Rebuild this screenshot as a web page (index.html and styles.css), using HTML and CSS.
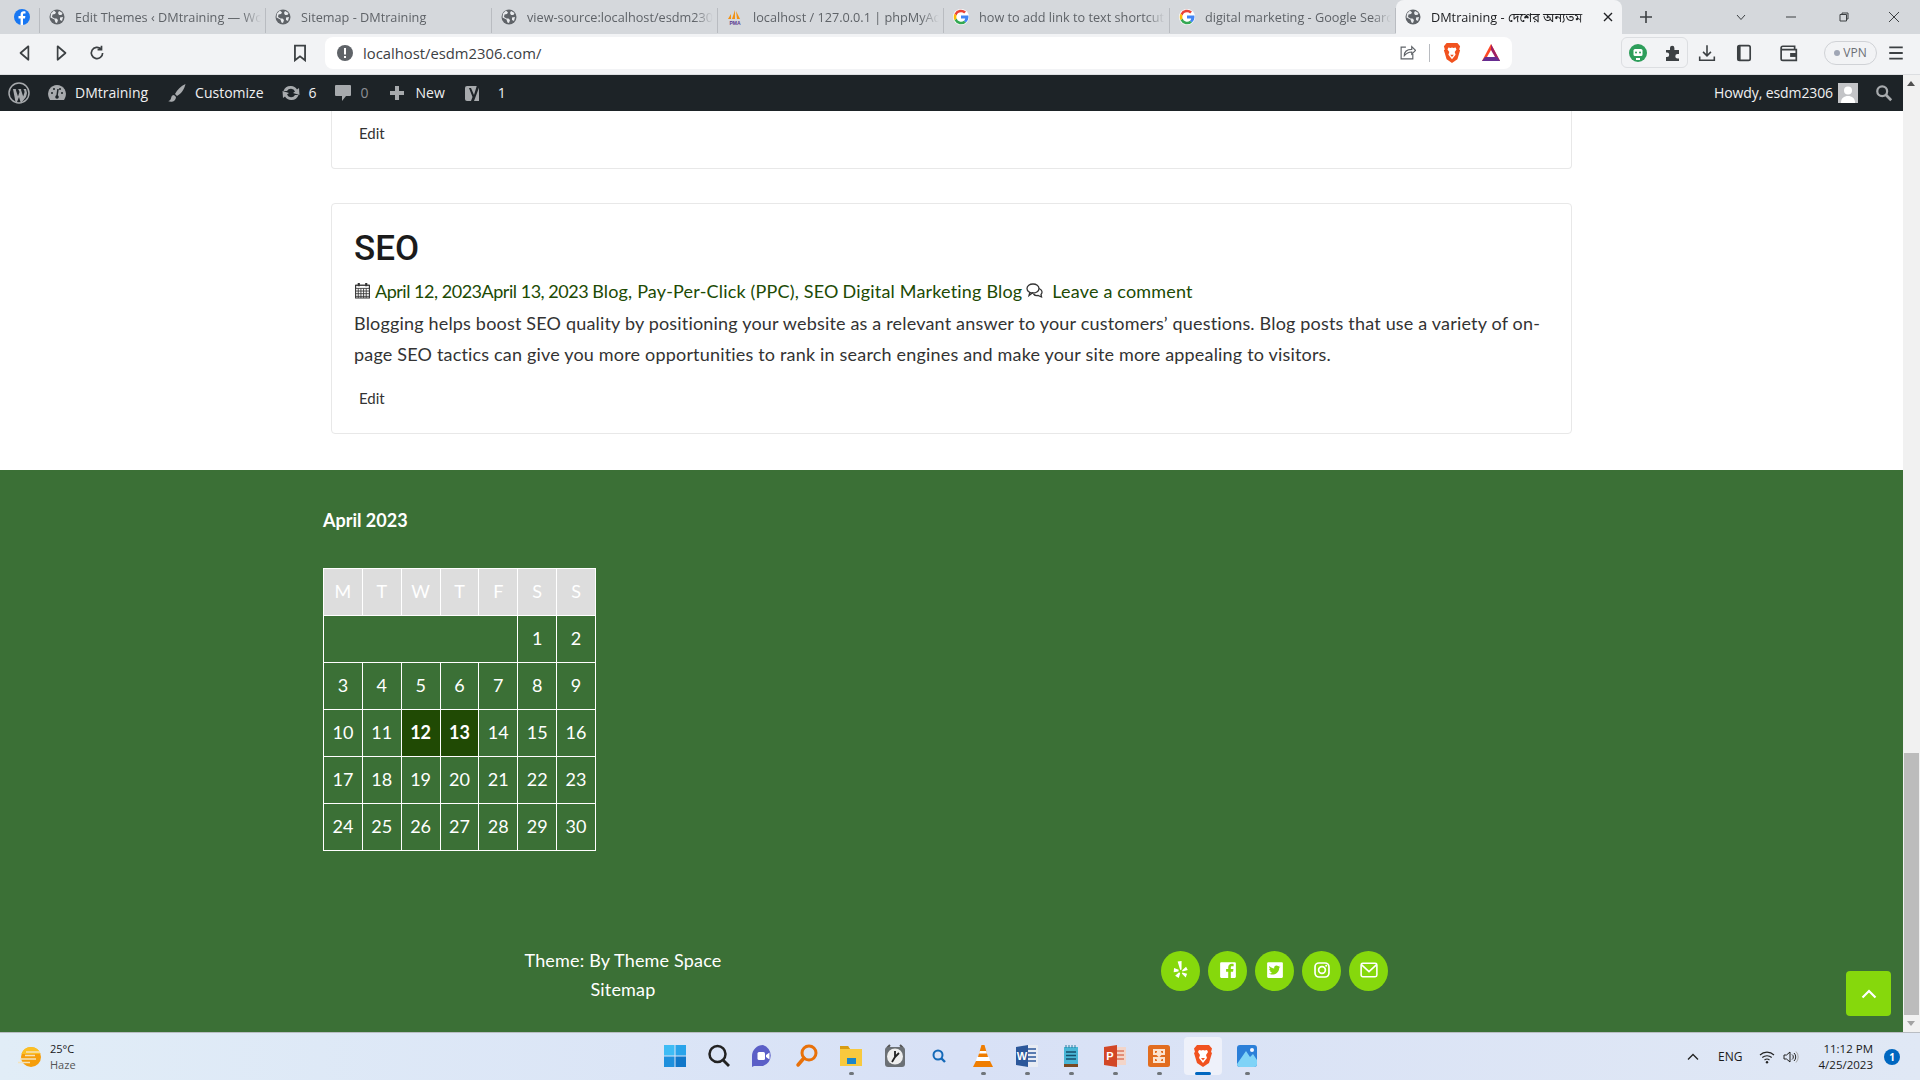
FILE: index.html
```html
<!DOCTYPE html>
<html lang="en">
<head>
<meta charset="utf-8">
<title>DMtraining</title>
<link rel="stylesheet" href="styles.css">
</head>
<body>
<svg class="defs" width="0" height="0">
  <defs>
    <symbol id="globe" viewBox="0 0 16 16"><circle cx="8" cy="8" r="7.5" fill="#5f6368"/><path d="M5 1.500 7 3.500 6 5 3.500 5.500 3 8l2.500 1.500L7.500 9.500 9 11l-1 3-1.500-.5L5.500 10.500 1.500 8.500 2 4.500zM10 2l3.500 2-1 2L10 6 9 4zM11 8.500l3-.5-1 4-2-1z" fill="#e8eaed"/></symbol>
    <symbol id="gicon" viewBox="0 0 16 16"><circle cx="8" cy="8" r="8" fill="#fff"/><path d="M8 3.200a4.800 4.800 0 0 1 3.200 1.200L13 2.600A7.300 7.300 0 0 0 1.500 4.800l2.100 1.600A4.700 4.700 0 0 1 8 3.200z" fill="#ea4335"/><path d="M3.600 9.600 1.500 11.200A7.300 7.300 0 0 0 13 13.400l-2-1.600A4.800 4.800 0 0 1 3.600 9.600z" fill="#34a853"/><path d="M3.600 9.600a4.900 4.900 0 0 1 0-3.200L1.500 4.800a7.300 7.300 0 0 0 0 6.400z" fill="#fbbc05"/><path d="M15.300 6.600H8v3h4.200A3.600 3.600 0 0 1 11 11.800l2 1.600a7.300 7.300 0 0 0 2.300-6.800z" fill="#4285f4"/></symbol>
    <symbol id="lion" viewBox="0 0 20 24"><path d="M4 1h12l3 3.500-1 3.500 1 1-3 10-6 4-6-4-3-10 1-1-1-3.500z" fill="#f1521f"/><path d="M6 6l2.500.5L10 6l1.500.5L14 6l1 2-2 3 1 3-4 5-4-5 1-3-2-3z" fill="#fff"/><path d="M8 14h4l-2 2.500z" fill="#f1521f"/></symbol>
  </defs>
</svg>

<header class="tabstrip">
  <div class="tab-pinned">
    <svg class="fav" viewBox="0 0 16 16"><circle cx="8" cy="8" r="8" fill="#1877f2"/><path d="M9 16V9.500h2l.4-2.400H9V5.700c0-.8.300-1.200 1.200-1.200h1.300V2.400C11 2.300 10.400 2.200 9.800 2.200 7.900 2.200 6.600 3.400 6.600 5.400v1.700H4.500v2.400h2.100V16z" fill="#fff"/></svg>
  </div>
  <div class="tab"><svg class="fav"><use href="#globe"/></svg><span class="tab-title">Edit Themes ‹ DMtraining — WordPress</span></div>
  <div class="tab"><svg class="fav"><use href="#globe"/></svg><span class="tab-title">Sitemap - DMtraining</span></div>
  <div class="tab"><svg class="fav"><use href="#globe"/></svg><span class="tab-title">view-source:localhost/esdm2306.com/</span></div>
  <div class="tab">
    <svg class="fav" viewBox="0 0 16 16"><path d="M8 1 5 10h3zM9 2l1 8h3zM4 5 1 10h3z" fill="#f29111"/><text x="8" y="15.500" class="pma">PMA</text></svg>
    <span class="tab-title">localhost / 127.0.0.1 | phpMyAdmin</span></div>
  <div class="tab"><svg class="fav"><use href="#gicon"/></svg><span class="tab-title">how to add link to text shortcut</span></div>
  <div class="tab"><svg class="fav"><use href="#gicon"/></svg><span class="tab-title">digital marketing - Google Search</span></div>
  <div class="tab tab-active"><svg class="fav"><use href="#globe"/></svg><span class="tab-title">DMtraining - দেশের অন্যতম</span>
    <svg class="tab-x" viewBox="0 0 10 10"><path d="M1 1l8 8M9 1l-8 8" stroke="#202124" stroke-width="1.400"/></svg></div>
  <svg class="newtab" viewBox="0 0 12 12"><path d="M6 0v12M0 6h12" stroke="#3c4043" stroke-width="1.600"/></svg>
  <div class="win-controls">
    <svg class="win-btn win-chevron" viewBox="0 0 10 10"><path d="M1 3l4 4.500L9 3" fill="none" stroke="#3c4043" stroke-width="1"/></svg>
    <svg class="win-btn win-min" viewBox="0 0 10 10"><path d="M0 5h10" stroke="#3c4043"/></svg>
    <svg class="win-btn win-restore" viewBox="0 0 10 10"><path d="M1 2.500h6.500V9H1zM3 2.500V1h6v6H7.500" fill="none" stroke="#3c4043"/></svg>
    <svg class="win-btn" viewBox="0 0 10 10"><path d="M0 0l10 10M10 0 0 10" stroke="#3c4043"/></svg>
  </div>
</header>

<div class="toolbar">
  <svg class="tool" viewBox="0 0 16 16"><path d="M11 2 4 8l7 6z" fill="none" stroke="#3c4043" stroke-width="1.500" stroke-linejoin="round"/></svg>
  <svg class="tool" viewBox="0 0 16 16"><path d="M5 2l7 6-7 6z" fill="none" stroke="#3c4043" stroke-width="1.500" stroke-linejoin="round"/></svg>
  <svg class="tool" viewBox="0 0 16 16"><path d="M13 8a5 5 0 1 1-1.500-3.600M12 1.500V5H8.500" fill="none" stroke="#3c4043" stroke-width="1.500"/></svg>
  <svg class="tool tool-bookmark" viewBox="0 0 16 16"><path d="M3.500 1.500h9v13L8 11l-4.500 3.500z" fill="none" stroke="#3c4043" stroke-width="1.600"/></svg>
  <div class="omnibox">
    <svg class="omni-info" viewBox="0 0 16 16"><circle cx="8" cy="8" r="8" fill="#5f6368"/><path d="M7 3h2v6.500H7zM7 11h2v2H7z" fill="#fff"/></svg>
    <span class="url">localhost/esdm2306.com/</span>
    <svg class="omni-share" viewBox="0 0 16 16"><path d="M6.500 3H2v11h11V9.500M5 11c0-4 3-6 7-6V2.500L15.500 6 12 9.500V7.500c-3 0-5 1-7 3.500z" fill="none" stroke="#5f6368" stroke-width="1.100"/></svg>
    <span class="omni-sep"></span>
    <svg class="omni-lion"><use href="#lion"/></svg>
    <svg class="omni-bat" viewBox="0 0 20 20"><path d="M10 1 19 18H1z" fill="#ff4724"/><path d="M10 1l9 17H10z" fill="#9e1f63"/><path d="M1 18h18l-3-4H4z" fill="#662d91"/><path d="M10 7l4 7H6z" fill="#fff"/></svg>
  </div>
  <div class="ext-box">
    <svg class="ext" viewBox="0 0 18 18"><circle cx="9" cy="9" r="9" fill="#2e9e5b"/><rect x="4.500" y="5" width="9" height="7" rx="1.500" fill="#fff"/><circle cx="7" cy="8.500" r="1" fill="#2e9e5b"/><circle cx="11" cy="8.500" r="1" fill="#2e9e5b"/><path d="M7 14h4v2H7z" fill="#fff"/></svg>
    <svg class="ext" viewBox="0 0 18 18"><path d="M2 6h4V4a2.200 2.200 0 0 1 4.400 0v2H15v4h-1.500a2.200 2.200 0 0 0 0 4.400H15V17H2v-4h1a2.200 2.200 0 0 0 0-4.400H2z" fill="#3c4043"/></svg>
  </div>
  <svg class="tool tool-dl" viewBox="0 0 16 16"><path d="M8 1v9M4.500 7 8 10.500 11.500 7M1.500 11v3.500h13V11" fill="none" stroke="#3c4043" stroke-width="1.400"/></svg>
  <svg class="tool tool-side" viewBox="0 0 16 16"><rect x="2.500" y="1.500" width="11" height="13" rx="1.500" fill="none" stroke="#3c4043" stroke-width="1.500"/><rect x="2.500" y="1.500" width="2.500" height="13" fill="#3c4043"/></svg>
  <svg class="tool tool-wallet" viewBox="0 0 18 16"><path d="M2 3.500V13a1.500 1.500 0 0 0 1.500 1.500h12V5H3.500A1.500 1.500 0 0 1 2 3.500 1.500 1.500 0 0 1 3.500 2H14v3" fill="none" stroke="#3c4043" stroke-width="1.500"/><rect x="10" y="8" width="6" height="3.500" fill="#3c4043"/></svg>
  <div class="vpn"><span class="vpn-dot"></span>VPN</div>
  <svg class="tool tool-menu" viewBox="0 0 16 16"><path d="M2 3h12M2 8h12M2 13h12" stroke="#3c4043" stroke-width="1.600"/></svg>
</div>

<div class="viewport">
  <div class="page">
    <nav class="adminbar">
      <div class="ab-group">
        <svg class="ab-wp" viewBox="0 0 22 22"><circle cx="11" cy="11" r="10" fill="none" stroke="#a7aaad" stroke-width="1.500"/><path d="M5 7h3.500l-.8.500 2.300 7 1.500-4.500-1-2.500-.8-.5h4l-.8.500 2.300 7 1.200-3.700c.5-1.800-.6-2.800-.9-3.800H18l1 4-1 4-4 5h-1.500l-1.500-5-2 5H7.500z" fill="#a7aaad"/></svg>
        <span class="ab-item ab-site"><svg class="ab-i" viewBox="0 0 20 20"><path d="M10 2a9 9 0 0 0-8 13l1 2h14l1-2a9 9 0 0 0-8-13z" fill="#a7aaad"/><path d="M10 13l1-7" stroke="#1d2327" stroke-width="1.500"/><circle cx="10" cy="14" r="1.800" fill="#1d2327"/><circle cx="5" cy="10" r="1" fill="#1d2327"/><circle cx="15" cy="10" r="1" fill="#1d2327"/><circle cx="7" cy="6" r="1" fill="#1d2327"/><circle cx="13" cy="6" r="1" fill="#1d2327"/></svg>DMtraining</span>
        <span class="ab-item ab-custom"><svg class="ab-i" viewBox="0 0 20 20"><path d="M18.500 1C14 3 10 7 8 11l2 2C14 11 17.500 6 18.500 1zM7 12c-3 0-2.500 3-3.500 4.500C2.800 17.500 1.500 18 1 18c3 1.500 7.500 1 8-4z" fill="#a7aaad"/></svg>Customize</span>
        <span class="ab-item ab-update"><svg class="ab-i" viewBox="0 0 20 20"><path d="M10 3a7 7 0 0 1 6 3.500L18 5l.5 7-6.500-2 2-1.500A4.500 4.500 0 0 0 6 8H2.500A7.500 7.500 0 0 1 10 3zM10 17a7 7 0 0 1-6-3.500L2 15l-.5-7L8 10l-2 1.500A4.500 4.500 0 0 0 14 12h3.500A7.500 7.500 0 0 1 10 17z" fill="#a7aaad"/></svg>6</span>
        <span class="ab-item ab-comment"><svg class="ab-i" viewBox="0 0 20 20"><path d="M3 2h14a1 1 0 0 1 1 1v9a1 1 0 0 1-1 1h-4l-4 5v-5H3a1 1 0 0 1-1-1V3a1 1 0 0 1 1-1z" fill="#a7aaad"/></svg><span class="ab-muted">0</span></span>
        <span class="ab-item ab-new"><svg class="ab-i" viewBox="0 0 20 20"><path d="M8 3h4v5h5v4h-5v5H8v-5H3V8h5z" fill="#a7aaad"/></svg>New</span>
        <span class="ab-item ab-yoast"><svg class="ab-i ab-i-y" viewBox="0 0 20 20"><path d="M4 3h11a1 1 0 0 1 1 1v14H4a2 2 0 0 1-2-2V5a2 2 0 0 1 2-2z" fill="#a7aaad"/><path d="M8 5l3 7 3-10h3l-6 16H8l1.500-4L6 5z" fill="#1d2327"/></svg>1</span>
      </div>
      <div class="ab-group">
        <span class="ab-howdy">Howdy, esdm2306</span>
        <svg class="ab-avatar" viewBox="0 0 20 20"><rect width="20" height="20" fill="#c3c4c7"/><circle cx="10" cy="7.500" r="4" fill="#fff"/><path d="M3 20c0-5 3-7 7-7s7 2 7 7z" fill="#fff"/></svg>
        <svg class="ab-search" viewBox="0 0 20 20"><circle cx="8" cy="8" r="5.500" fill="none" stroke="#a7aaad" stroke-width="2.500"/><path d="M12 12l6 6" stroke="#a7aaad" stroke-width="3"/></svg>
      </div>
    </nav>

    <main class="content">
      <article class="card card-cut">
        <a class="edit">Edit</a>
      </article>
      <article class="card card-post">
        <h2 class="post-title">SEO</h2>
        <div class="post-meta">
          <svg class="meta-i" viewBox="0 0 16 16"><path d="M1.500 3h13v12h-13z" fill="none" stroke="#333" stroke-width="1"/><path d="M1.500 3h13v3h-13zM1.500 8.500h13M1.500 11h13M1.500 13.500h13M4 6v9M6.500 6v9M9 6v9M11.500 6v9" fill="none" stroke="#333" stroke-width=".8"/><path d="M3.500 1h2v3h-2zM10.500 1h2v3h-2z" fill="#333"/></svg>
          <span class="meta-date">April 12, 2023April 13, 2023</span>
          <span>Blog, Pay-Per-Click (PPC), SEO</span>
          <span>Digital Marketing Blog</span>
          <svg class="meta-i meta-c" viewBox="0 0 18 16"><ellipse cx="7" cy="6" rx="6" ry="4.500" fill="none" stroke="#333" stroke-width="1.300"/><path d="M4 9.500 3 13l4-3M13 6c3 1 4 4 2 6l.5 2.500L12 13c-2 .3-3.500-.2-4.500-1.500" fill="none" stroke="#333" stroke-width="1.300"/></svg>
          <span class="meta-comment">Leave a comment</span>
        </div>
        <p class="post-text">Blogging helps boost SEO quality by positioning your website as a relevant answer to your customers’ questions. Blog posts that use a variety of on-page SEO tactics can give you more opportunities to rank in search engines and make your site more appealing to visitors.</p>
        <a class="edit edit-post">Edit</a>
      </article>
    </main>

    <footer class="footer">
      <h3 class="cal-title">April 2023</h3>
      <table class="calendar">
        <thead><tr><th>M</th><th>T</th><th>W</th><th>T</th><th>F</th><th>S</th><th>S</th></tr></thead>
        <tbody>
          <tr><td colspan="5"></td><td>1</td><td>2</td></tr>
          <tr><td>3</td><td>4</td><td>5</td><td>6</td><td>7</td><td>8</td><td>9</td></tr>
          <tr><td>10</td><td>11</td><td class="cal-on">12</td><td class="cal-on">13</td><td>14</td><td>15</td><td>16</td></tr>
          <tr><td>17</td><td>18</td><td>19</td><td>20</td><td>21</td><td>22</td><td>23</td></tr>
          <tr><td>24</td><td>25</td><td>26</td><td>27</td><td>28</td><td>29</td><td>30</td></tr>
        </tbody>
      </table>
      <div class="foot-row">
        <div class="credit"><div>Theme: By Theme Space</div><div class="credit-map">Sitemap</div></div>
        <div class="socials">
          <span class="soc"><svg viewBox="0 0 16 16"><path d="M5 .5 8.500 0v7.500L7.300 8zM1.800 6.200 6 7.800l-.3 1.500-4.200.6zM2.800 13l3.500-3 1 .8L6 15zM9.200 10.200l4.200 1.200-1.200 3.300-3.500-3.500zM9 8.200l3.500-3.200 1.500 3-4.700 1.300z" fill="#fff"/></svg></span>
          <span class="soc"><svg viewBox="0 0 16 16"><path d="M2 1h12a1 1 0 0 1 1 1v12a1 1 0 0 1-1 1h-3.500V9.500h2l.3-2.300h-2.300V5.800c0-.7.200-1.100 1.100-1.100H13V2.600c-.3 0-1-.1-1.700-.1C9.500 2.500 8.200 3.600 8.200 5.500v1.700H6.300v2.300h1.900V15H2a1 1 0 0 1-1-1V2a1 1 0 0 1 1-1z" fill="#fff"/></svg></span>
          <span class="soc"><svg viewBox="0 0 16 16"><path d="M2 1h12a1 1 0 0 1 1 1v12a1 1 0 0 1-1 1H2a1 1 0 0 1-1-1V2a1 1 0 0 1 1-1z" fill="#fff"/><path d="M12.500 5c-.4.200-.8.300-1.200.3.400-.3.800-.7.900-1.100-.4.200-.9.400-1.300.5a2.100 2.100 0 0 0-3.600 1.900C5.500 6.500 4 5.700 3.100 4.400c-.5.900-.2 2.100.7 2.700-.3 0-.7-.1-1-.3 0 1 .7 1.900 1.700 2.100-.3.100-.6.100-.9 0 .3.800 1 1.400 1.900 1.400-.9.700-2 1-3 .9 3 1.900 8.900.9 9.300-5.300.5-.3.900-.7 1.200-1z" fill="#86d80c"/></svg></span>
          <span class="soc"><svg viewBox="0 0 16 16"><rect x="1.800" y="1.800" width="12.400" height="12.400" rx="3.500" fill="none" stroke="#fff" stroke-width="1.500"/><circle cx="8" cy="8" r="3" fill="none" stroke="#fff" stroke-width="1.500"/><circle cx="11.700" cy="4.300" r=".9" fill="#fff"/></svg></span>
          <span class="soc"><svg viewBox="0 0 16 16"><rect x="1" y="2" width="14" height="12" rx="1.500" fill="none" stroke="#fff" stroke-width="1.400"/><path d="M1.500 3.500 8 9.500l6.500-6" fill="none" stroke="#fff" stroke-width="1.400"/></svg></span>
        </div>
      </div>
      <a class="to-top"><svg viewBox="0 0 16 10"><path d="M1.500 8.500 8 2l6.500 6.500" fill="none" stroke="#fff" stroke-width="2.200"/></svg></a>
    </footer>
  </div>
  <div class="scrollbar">
    <span class="sb-up"></span>
    <span class="sb-track"><span class="sb-thumb"></span></span>
    <span class="sb-down"></span>
  </div>
</div>

<div class="taskbar">
  <div class="weather">
    <svg class="weather-i" viewBox="0 0 26 22"><circle cx="13" cy="11" r="10" fill="#f59e0b"/><path d="M13 1a10 10 0 0 1 9.500 7H3.500A10 10 0 0 1 13 1z" fill="#fbbf24"/><path d="M2 13h16M8 6h14M7 9.500h10M0 16.500h12" stroke="#f3e3bc" stroke-width="1.500"/></svg>
    <div class="weather-t"><div>25°C</div><div class="weather-sub">Haze</div></div>
  </div>
  <div class="tb-apps">
    <span class="app"><svg viewBox="0 0 24 24"><path d="M1 1h10.500v10.500H1z" fill="#3ebcf5"/><path d="M12.500 1H23v10.500H12.500z" fill="#2aa4ea"/><path d="M1 12.500h10.500V23H1z" fill="#1e90dd"/><path d="M12.500 12.500H23V23H12.500z" fill="#1177c9"/></svg></span>
    <span class="app"><svg viewBox="0 0 24 24"><circle cx="10.500" cy="10" r="8" fill="none" stroke="#222" stroke-width="2.500"/><path d="M16 16l6 6" stroke="#222" stroke-width="2.800"/></svg></span>
    <span class="app"><svg viewBox="0 0 24 24"><path d="M12 1a11 11 0 0 1 0 21H3l-2 1V12A11 11 0 0 1 12 1z" fill="#5b5fc7"/><rect x="6.500" y="8" width="7.500" height="8" rx="1.500" fill="#fff"/><path d="M15 11l3.500-2.500v7L15 13z" fill="#fff"/></svg></span>
    <span class="app"><svg viewBox="0 0 24 24"><circle cx="14" cy="9" r="7" fill="none" stroke="#e8710a" stroke-width="3"/><path d="M9 14l-6 7" stroke="#e8710a" stroke-width="3.500" stroke-linecap="round"/></svg></span>
    <span class="app app-on"><svg viewBox="0 0 24 24"><path d="M1 2h8l2 3h12v17H1z" fill="#f8c93e"/><path d="M1 2h8l2 3H1z" fill="#d89c13"/><path d="M8 14h9v6H8z" fill="#1c86c8"/></svg></span>
    <span class="app"><svg viewBox="0 0 24 24"><path d="M4 4 7 1M20 4l-3-3" stroke="#555" stroke-width="2"/><rect x="2" y="3" width="20" height="20" rx="3" fill="#6b7075"/><circle cx="12" cy="12.500" r="8" fill="#eee"/><path d="M12 13V7M12 13l4-4M12 13l-3 5" stroke="#222" stroke-width="1.800"/></svg></span>
    <span class="app"><svg class="app-sm" viewBox="0 0 16 16"><circle cx="7" cy="7" r="4.500" fill="none" stroke="#1469b8" stroke-width="2"/><path d="M10 10l4 4" stroke="#1469b8" stroke-width="2.400"/></svg></span>
    <span class="app app-on"><svg viewBox="0 0 24 24"><path d="M10.500 1h3L17 13H7z" fill="#ef7d00"/><path d="M8.700 7h6.600l.6 2.500H8z" fill="#fff"/><path d="M2 23l3-6h14l3 6z" fill="#ef7d00"/><path d="M6 13h12l1 4H5z" fill="#fff"/></svg></span>
    <span class="app app-on"><svg viewBox="0 0 24 24"><path d="M9 1h14v22H9z" fill="#e8ecf4"/><path d="M13 5h8M13 9h8M13 13h8M13 17h8" stroke="#2b579a" stroke-width="1.500"/><path d="M1 3l12-2v22L1 21z" fill="#2b579a"/><text x="7" y="15.500" class="app-letter">W</text></svg></span>
    <span class="app app-on"><svg viewBox="0 0 24 24"><path d="M5 3h14v17H5z" fill="#49b6d6"/><path d="M7 1v3M10 1v3M13 1v3M16 1v3" stroke="#2a7fa0"/><path d="M7 8h10M7 11.500h10M7 15h10" stroke="#174f6c" stroke-width="1.600"/><path d="M5 20h14v3H5z" fill="#7a4a22"/></svg></span>
    <span class="app app-on"><svg viewBox="0 0 24 24"><path d="M12 3h11v18H12z" fill="#f3d5c9"/><path d="M14 7h7M14 11h7M14 15h7" stroke="#d24726"/><path d="M1 3l13-2v22L1 21z" fill="#d24726"/><text x="7" y="15.500" class="app-letter">P</text></svg></span>
    <span class="app app-on"><svg viewBox="0 0 24 24"><rect x="1" y="1" width="22" height="22" rx="2.500" fill="#e26d1f"/><path d="M7 6h4v4H7zM13 6h4v4h-4zM7 14h4v4H7zM13 14h4v4h-4zM9 9l6 6M15 9l-6 6" fill="none" stroke="#fbe3cf" stroke-width="2"/></svg></span>
    <span class="app app-active"><svg viewBox="0 0 20 24"><use href="#lion"/></svg></span>
    <span class="app app-on"><svg viewBox="0 0 24 24"><rect x="2" y="1" width="20" height="22" rx="3" fill="#2b7fd8"/><path d="M2 20 11 7l4 6 3-3 4 6v4a3 3 0 0 1-3 3H5a3 3 0 0 1-3-3z" fill="#7fd3f7"/><circle cx="17" cy="6" r="2" fill="#f3f6ff"/></svg></span>
  </div>
  <div class="tray">
    <svg class="tray-caret" viewBox="0 0 12 8"><path d="M1 6.500 6 1.500l5 5" fill="none" stroke="#222" stroke-width="1.300"/></svg>
    <span class="tray-lang">ENG</span>
    <svg class="tray-wifi" viewBox="0 0 16 14"><path d="M1 5a10 10 0 0 1 14 0M3.300 7.500a7 7 0 0 1 9.400 0M5.500 10a4 4 0 0 1 5 0" fill="none" stroke="#222" stroke-width="1.100"/><circle cx="8" cy="12.300" r="1.200" fill="#222"/></svg>
    <svg class="tray-vol" viewBox="0 0 16 14"><path d="M1 5h2.500L7 2v10L3.500 9H1z" fill="none" stroke="#222"/><path d="M9 4.500a3 3 0 0 1 0 5M11 3a5.500 5.500 0 0 1 0 8" fill="none" stroke="#222"/><path d="M13 1.500a8 8 0 0 1 0 11" fill="none" stroke="#aaa"/></svg>
    <div class="tray-clock"><div>11:12 PM</div><div>4/25/2023</div></div>
    <span class="tray-badge">1</span>
  </div>
</div>
</body>
</html>
```
FILE: styles.css
```css
* { box-sizing: border-box; }
html, body { margin: 0; height: 100%; }
body {
  width: 1920px;
  height: 1080px;
  overflow: hidden;
  display: flex;
  flex-direction: column;
  font-family: "Lato", "Noto Sans Bengali", "Noto Sans", sans-serif;
  background: #fff;
}
.defs { position: absolute; }

/* tab strip */
.tabstrip {
  flex: 0 0 34px;
  height: 34px;
  min-height: 0;
  display: flex;
  align-items: stretch;
  background: #d5d8dc;
  font-family: "Open Sans", "Noto Sans Bengali", sans-serif;
  font-size: 12.700px;
  line-height: 16px;
  color: #5f6368;
}
.tab-pinned {
  flex: none;
  width: 40px;
  display: flex;
  align-items: center;
  padding: 0 0 8px 14px;
  border-right: 1px solid #b9bcc1;
  margin: 8px 0 1px;
}
.tab-pinned .fav { margin: 0; }
.fav { width: 16px; height: 16px; flex: none; margin-right: 10px; }
.pma { font: bold 5px "Liberation Sans", sans-serif; fill: #5a3b8f; text-anchor: middle; }
.tab {
  flex: none;
  width: 226px;
  display: flex;
  align-items: center;
  padding: 0 4px 8px 9px;
  margin: 8px 0 1px;
  border-right: 1px solid #b9bcc1;
  overflow: hidden;
}
.tab-title {
  flex: 1;
  min-width: 0;
  white-space: nowrap;
  overflow: hidden;
  -webkit-mask-image: linear-gradient(to right, #000 90%, transparent);
  mask-image: linear-gradient(to right, #000 90%, transparent);
}
.tab-active {
  margin: 0;
  background: #f2f3f5;
  border-right: 0;
  border-radius: 8px 8px 0 0;
  color: #202124;
  padding: 0 9px;
}
.tab-x { width: 10px; height: 10px; margin-left: 8px; flex: none; }
.newtab { width: 12px; height: 12px; margin: 11px 0 0 18px; flex: none; }
.win-controls { flex: 1; display: flex; align-items: center; padding-left: 84px; }
.win-btn { width: 10px; height: 10px; margin-right: 40px; flex: none; }
.win-min { margin-right: 43px; }

/* toolbar */
.toolbar {
  flex: 0 0 41px;
  display: flex;
  align-items: center;
  padding: 0 0 3px 7px;
  background: #f2f3f5;
  border-bottom: 1px solid #dcdee1;
}
.tool { width: 36px; height: 18px; flex: none; }
.tool-bookmark { margin-left: 167px; }
.omnibox {
  width: 1187px;
  height: 32px;
  margin-left: 7px;
  flex: none;
  display: flex;
  align-items: center;
  padding-left: 12px;
  background: #fff;
  border-radius: 8px;
  font-family: "Open Sans", sans-serif;
  font-size: 14.800px;
  color: #3c4043;
}
.omni-info { width: 16px; height: 16px; margin-right: 10px; }
.url { flex: 1; }
.omni-share { width: 17px; height: 17px; margin-right: 13px; }
.omni-sep { width: 1px; height: 18px; background: #b8bbc0; margin-right: 13px; }
.omni-lion { width: 18px; height: 22px; margin-right: 20px; }
.omni-bat { width: 20px; height: 20px; margin-right: 11px; }
.ext-box {
  width: 67px;
  height: 31px;
  margin-left: 109px;
  flex: none;
  display: flex;
  align-items: center;
  gap: 17px;
  padding-left: 7px;
  border: 1px solid #dcdee1;
  border-radius: 6px;
}
.ext { width: 18px; height: 18px; }
.tool-dl { margin-left: 1px; }
.tool-side { margin-left: 1px; }
.tool-wallet { margin-left: 9px; }
.vpn {
  width: 53px;
  height: 24px;
  flex: none;
  margin-left: 17px;
  display: flex;
  align-items: center;
  justify-content: center;
  gap: 3px;
  border: 1px solid #d0d2d6;
  border-radius: 12px;
  font: 12px "Open Sans", sans-serif;
  color: #6b6f75;
}
.vpn-dot { width: 6px; height: 6px; border-radius: 50%; background: #a0a6b5; }
.tool-menu { margin-left: 1px; }

/* viewport */
.viewport { flex: 1; display: flex; min-height: 0; }
.page { flex: 1; min-width: 0; display: flex; flex-direction: column; }
.scrollbar { width: 17px; flex: none; display: flex; flex-direction: column; background: #f1f1f1; }
.sb-up, .sb-down { height: 17px; flex: none; position: relative; }
.sb-up::after, .sb-down::after {
  content: "";
  position: absolute;
  left: 4px;
  width: 0;
  height: 0;
  border-left: 4.500px solid transparent;
  border-right: 4.500px solid transparent;
}
.sb-up::after { top: 6px; border-bottom: 5px solid #505050; }
.sb-down::after { top: 6px; border-top: 5px solid #a3a3a3; }
.sb-track { flex: 1; display: flex; flex-direction: column; justify-content: flex-end; }
.sb-thumb { height: 262px; margin: 0 1px; background: #bcbcbc; }

/* admin bar */
.adminbar {
  flex: 0 0 36px;
  display: flex;
  justify-content: space-between;
  align-items: center;
  padding-bottom: 1px;
  background: #1d2327;
  color: #f0f0f1;
  font: 14px "Open Sans", sans-serif;
}
.ab-group { display: flex; align-items: center; }
.ab-wp { width: 22px; height: 22px; margin: 0 0 0 8px; }
.ab-item { display: flex; align-items: center; }
.ab-i { width: 20px; height: 20px; margin-right: 8px; flex: none; }
.ab-i-y { margin-right: 15px; }
.ab-site { margin-left: 17px; }
.ab-custom { margin-left: 19px; }
.ab-update { margin-left: 17px; }
.ab-comment { margin-left: 16px; }
.ab-muted { color: #8c8f94; }
.ab-new { margin-left: 18px; }
.ab-new .ab-i { margin-right: 9px; }
.ab-yoast { margin-left: 18px; }
.ab-howdy { margin-right: 5px; letter-spacing: -.1px; }
.ab-avatar { width: 20px; height: 20px; margin-right: 17px; }
.ab-search { width: 18px; height: 18px; margin-right: 10px; }

/* content */
.content { flex: 0 0 359px; padding: 0 331px; font-size: 18px; letter-spacing: .18px; color: #333; }
.card { border: 1px solid #e8e8e8; border-radius: 4px; background: #fff; }
.card-cut { height: 58px; border-top: 0; border-radius: 0 0 4px 4px; padding-top: 12px; }
.card-post { height: 231px; margin-top: 34px; padding: 24px 22px 0; }
.edit { display: block; font-size: 15px; line-height: 20px; letter-spacing: 0; color: #333; padding-left: 4px; margin-left: 23px; }
.edit-post { margin: 18px 0 0; padding-left: 5px; }
.post-title { margin: 0; font: 500 35px/42px "Roboto", sans-serif; letter-spacing: 0; color: #1b1b1b; }
.post-meta { display: flex; align-items: center; gap: 4px; height: 31px; margin: 5px 0 2px; color: #204a04; white-space: nowrap; }
.meta-date { letter-spacing: -.48px; }
.meta-i { width: 17px; height: 17px; flex: none; }
.meta-c { width: 18px; }
.meta-comment { margin-left: 4px; }
.post-text { margin: 0; line-height: 31px; color: #333; }

/* footer */
.footer { flex: 1; position: relative; padding: 0 0 0 323px; background: #3b7036; color: #fff; }
.cal-title { margin: 38px 0 0; font-size: 18px; line-height: 24px; font-weight: 700; }
.calendar {
  border-collapse: collapse;
  table-layout: fixed;
  width: 273px;
  margin-top: 36px;
  font-size: 18px;
  text-align: center;
}
.calendar th, .calendar td { border: 1px solid #fff; height: 47px; padding: 0 0 2px; font-weight: 400; }
.calendar th { background: #ddd; color: #fff; }
.calendar .cal-on { background: #204a04; font-weight: 700; }
.foot-row { display: flex; margin-top: 95px; }
.credit { width: 600px; text-align: center; font-size: 18px; line-height: 29px; letter-spacing: .18px; }
.socials { display: flex; gap: 8px; margin: 5px 0 0 238px; }
.soc {
  width: 39px;
  height: 40px;
  border-radius: 50%;
  background: #86d80c;
  display: flex;
  align-items: center;
  justify-content: center;
}
.soc svg { width: 18px; height: 18px; margin-top: -2px; }
.to-top {
  position: absolute;
  right: 12px;
  bottom: 16px;
  width: 45px;
  height: 45px;
  border-radius: 4px;
  background: #86d80c;
  display: flex;
  align-items: center;
  justify-content: center;
}
.to-top svg { width: 16px; height: 10px; }

/* taskbar */
.taskbar {
  flex: 0 0 48px;
  display: grid;
  grid-template-columns: 1fr auto 1fr;
  align-items: center;
  background: linear-gradient(to right, #e1edf7, #d8e1f6 50%, #e0e8f5);
  border-top: 1px solid #b9bdc3;
  font: 11px "Open Sans", sans-serif;
  color: #1a1a1a;
}
.weather { display: flex; align-items: center; padding-left: 18px; }
.weather-i { width: 26px; height: 22px; margin-right: 6px; }
.weather-t { line-height: 16px; }
.weather-sub { color: #555; }
.tb-apps { display: flex; padding-left: 1px; margin-bottom: 1px; }
.app { width: 44px; height: 38px; display: flex; align-items: center; justify-content: center; position: relative; }
.app svg { width: 24px; height: 24px; }
.app svg.app-sm { width: 16px; height: 16px; }
.app-letter { font: bold 11px "Liberation Sans", sans-serif; fill: #fff; text-anchor: middle; }
.app-on::after {
  content: "";
  position: absolute;
  left: 20px;
  bottom: 0;
  width: 5px;
  height: 3px;
  border-radius: 2px;
  background: #70757a;
}
.app-active { background: #eef1fa; border-radius: 4px; width: 38px; margin: 0 3px; }
.app-active::after {
  content: "";
  position: absolute;
  left: 11px;
  bottom: 0;
  width: 16px;
  height: 3px;
  border-radius: 2px;
  background: #0067c0;
}
.tray { display: flex; align-items: center; justify-content: flex-end; padding-right: 20px; }
.tray-caret { width: 12px; height: 8px; margin-right: 19px; }
.tray-lang { margin-right: 16px; font-size: 12px; }
.tray-wifi { width: 16px; height: 14px; margin-right: 8px; }
.tray-vol { width: 16px; height: 14px; margin-right: 20px; }
.tray-clock { text-align: right; line-height: 16px; font-size: 11.500px; margin-right: 11px; }
.tray-badge {
  width: 16px;
  height: 16px;
  border-radius: 50%;
  background: #0067c0;
  color: #fff;
  font-size: 10px;
  font-weight: 700;
  display: flex;
  align-items: center;
  justify-content: center;
}
```
